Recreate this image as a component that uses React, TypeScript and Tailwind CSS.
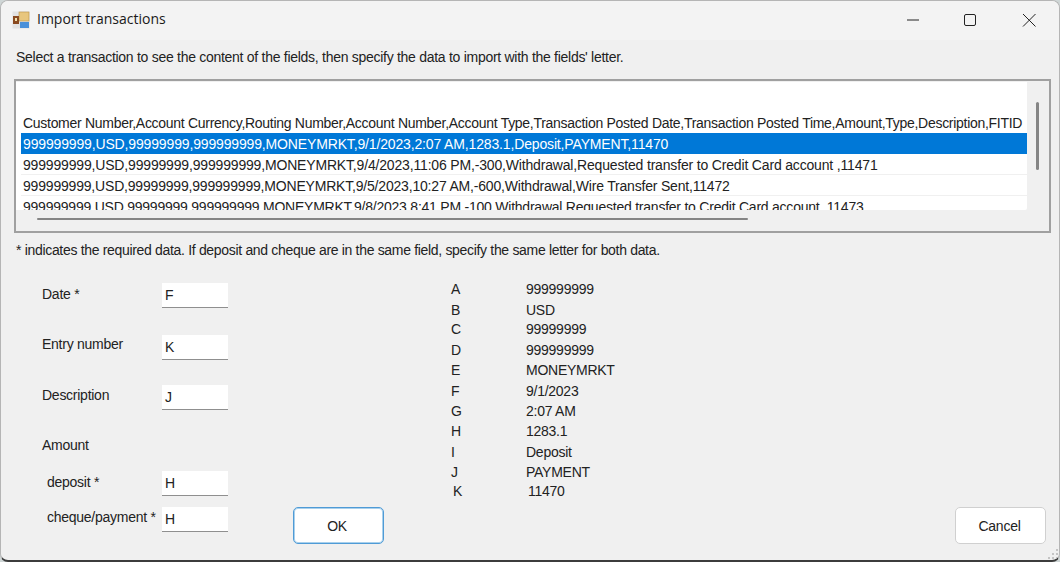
const font = "[font-family:'Liberation_Sans',Arial,sans-serif]";

const HEADER =
  "Customer Number,Account Currency,Routing Number,Account Number,Account Type,Transaction Posted Date,Transaction Posted Time,Amount,Type,Description,FITID";

const ROWS = [
  { text: "999999999,USD,99999999,999999999,MONEYMRKT,9/1/2023,2:07 AM,1283.1,Deposit,PAYMENT,11470", cls: "bg-[#0078d7] text-white tracking-[-0.15px]" },
  { text: "999999999,USD,99999999,999999999,MONEYMRKT,9/4/2023,11:06 PM,-300,Withdrawal,Requested transfer to Credit Card account ,11471", cls: "border-b border-[#f0f0f0] tracking-[-0.17px]" },
  { text: "999999999,USD,99999999,999999999,MONEYMRKT,9/5/2023,10:27 AM,-600,Withdrawal,Wire Transfer Sent,11472", cls: "border-b border-[#f0f0f0] tracking-[-0.19px]" },
  { text: "999999999,USD,99999999,999999999,MONEYMRKT,9/8/2023,8:41 PM,-100,Withdrawal,Requested transfer to Credit Card account ,11473", cls: "tracking-[-0.23px]" },
];

const FIELDS = [
  { letter: "A", value: "999999999", cls: "h-[21px]" },
  { letter: "B", value: "USD", cls: "h-[19px]" },
  { letter: "C", value: "99999999", cls: "h-[21px]" },
  { letter: "D", value: "999999999", cls: "h-[20px]" },
  { letter: "E", value: "MONEYMRKT", cls: "h-[21px]" },
  { letter: "F", value: "9/1/2023", cls: "h-[20px]" },
  { letter: "G", value: "2:07 AM", cls: "h-[20px]" },
  { letter: "H", value: "1283.1", cls: "h-[21px]" },
  { letter: "I", value: "Deposit", cls: "h-[20px]" },
  { letter: "J", value: "PAYMENT", cls: "h-[19px]" },
];

function AppIcon() {
  return (
    <svg width="18" height="18" viewBox="0 0 18 18" className="shrink-0">
      <rect x="0.5" y="0.5" width="17" height="17" fill="#e2e2e2" />
      <rect x="7" y="1" width="10" height="9" fill="#e8c67e" stroke="#b98f45" strokeWidth="0.6" />
      <rect x="1" y="5" width="6" height="8" fill="#8a4a20" />
      <rect x="3" y="7" width="2" height="3" fill="#f2e3b0" />
      <rect x="8" y="11" width="9" height="6" fill="#4a90d9" />
    </svg>
  );
}

function Field({ value, mt }: { value: string; mt: string }) {
  return (
    <div
      className={`h-[25px] w-[66px] border-b border-[#8f8f8f] bg-white pl-[3px] text-[14px] leading-[25px] text-[#222] ${mt}`}
    >
      {value}
    </div>
  );
}

function FormButton({ label, focused }: { label: string; focused?: boolean }) {
  return (
    <div
      className={
        "flex h-[37px] w-[91px] items-center justify-center rounded-[5px] border bg-white text-[14px] text-[#222] " +
        (focused
          ? "border-[#4f9bd6] pr-[3px] shadow-[inset_0_0_0_1px_#a9d0ec]"
          : "border-[#d0d0d0] pr-[2px]")
      }
    >
      {label}
    </div>
  );
}

function ResizeGrip() {
  return (
    <svg width="12" height="12" viewBox="0 0 12 12" className="absolute bottom-0 right-0">
      <g fill="#c4c4c4">
        <rect x="9" y="1" width="2" height="2" />
        <rect x="5" y="5" width="2" height="2" />
        <rect x="9" y="5" width="2" height="2" />
        <rect x="1" y="9" width="2" height="2" />
        <rect x="5" y="9" width="2" height="2" />
        <rect x="9" y="9" width="2" height="2" />
      </g>
    </svg>
  );
}

export default function App() {
  return (
    <div className={`h-[562px] w-[1060px] overflow-hidden bg-[#cfd6d6] ${font}`}>
      <div className="relative flex h-[562px] flex-col overflow-hidden rounded-lg border-x border-b-2 border-t border-[#b5b5b5] border-b-[#3c3c3c] bg-[#f0f0f0]">
        {/* title bar */}
        <div className="flex h-[39px] shrink-0 items-center bg-[#f3f3f3] pb-[2px] pl-[11px]">
          <AppIcon />
          <span className="mb-[2px] ml-[7px] font-['Open_Sans'] text-[14px] text-[#1a1a1a]">Import transactions</span>
          <div className="ml-auto flex items-center">
            <svg width="46" height="20" viewBox="0 0 46 20" className="mr-[12px]">
              <path d="M6 10H18" stroke="#222" strokeWidth="1" />
            </svg>
            <svg width="46" height="20" viewBox="0 0 46 20" className="mr-[13px]">
              <rect x="5.5" y="4.5" width="11" height="11" rx="1.5" fill="none" stroke="#222" strokeWidth="1" />
            </svg>
            <svg width="46" height="20" viewBox="0 0 46 20" className="-ml-[5px]">
              <path d="M10 4L22.5 16.5M22.5 4L10 16.5" stroke="#222" strokeWidth="1" />
            </svg>
          </div>
        </div>

        <div className="pl-[15px] pt-[9px] text-[14px] leading-[16px] tracking-[-0.28px] text-[#222]">
          Select a transaction to see the content of the fields, then specify the data to import with the fields' letter.
        </div>

        {/* transaction list */}
        <div className="mx-[13px] mt-[14px] flex h-[154px] w-[1037px] shrink-0 border-2 border-[#a0a0a0] bg-[#f0f0f0] pt-[1px]">
          <div className="w-[1011px] shrink-0">
            <div className="h-[128px] overflow-hidden rounded-br-[2px] bg-white text-[14px] leading-[21px] text-[#222]">
              <div className="h-[31px]" />
              <div className="h-[20px] whitespace-nowrap pl-[7px] tracking-[-0.29px]">{HEADER}</div>
              {ROWS.map((row) => (
                <div key={row.text} className={`ml-[5px] h-[21px] whitespace-nowrap pl-[2px] pt-[1px] ${row.cls}`}>
                  {row.text}
                </div>
              ))}
            </div>
            <div className="h-[21px] pl-[21px] pt-[8px]">
              <div className="h-[2px] w-[711px] rounded-full bg-[#858585]" />
            </div>
          </div>
          <div className="flex-1 pl-[9px] pt-[20px]">
            <div className="h-[68px] w-[3px] rounded-full bg-[#858585]" />
          </div>
        </div>

        <div className="pl-[15px] pt-[9px] text-[14px] leading-[16px] tracking-[-0.32px] text-[#222]">
          * indicates the required data. If deposit and cheque are in the same field, specify the same letter for both data.
        </div>

        <div className="flex flex-1 text-[14px] leading-[16px] tracking-[-0.26px] text-[#222]">
          {/* import fields */}
          <div className="ml-[41px] flex w-[186px] shrink-0 pt-[25px]">
            <div className="w-[120px] shrink-0">
              <div className="mt-[3px]">Date *</div>
              <div className="mt-[34px]">Entry number</div>
              <div className="mt-[35px]">Description</div>
              <div className="mt-[34px]">Amount</div>
              <div className="ml-[5px] mt-[21px]">deposit *</div>
              <div className="ml-[5px] mt-[19px] whitespace-nowrap">cheque/payment *</div>
            </div>
            <div className="shrink-0">
              <Field value="F" mt="" />
              <Field value="K" mt="mt-[27px]" />
              <Field value="J" mt="mt-[25px]" />
              <Field value="H" mt="mt-[61px]" />
              <Field value="H" mt="mt-[11px]" />
            </div>
          </div>

          <div className="mb-[16px] ml-[65px] self-end">
            <FormButton label="OK" focused />
          </div>

          {/* field preview */}
          <div className="ml-[67px] w-[200px] shrink-0 pt-[23px]">
            {FIELDS.map((f) => (
              <div key={f.letter} className={`flex ${f.cls}`}>
                <span className="w-[75px] shrink-0">{f.letter}</span>
                <span>{f.value}</span>
              </div>
            ))}
            <div className="flex pl-[2px]">
              <span className="w-[75px] shrink-0">K</span>
              <span>11470</span>
            </div>
          </div>

          <div className="mb-[16px] ml-auto mr-[13px] self-end">
            <FormButton label="Cancel" />
          </div>
        </div>
        <ResizeGrip />
      </div>
    </div>
  );
}
